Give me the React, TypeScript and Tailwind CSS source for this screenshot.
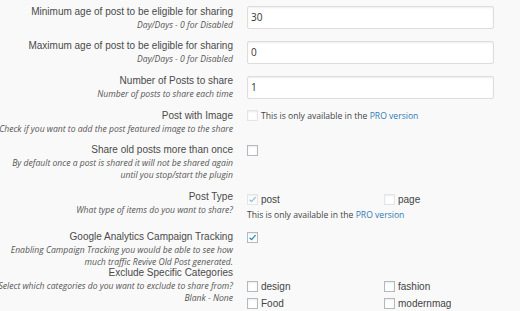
import React from "react";

const Check = ({ checked = false, disabled = false }: { checked?: boolean; disabled?: boolean }) => (
  <div
    className={
      "w-[11px] h-[11px] bg-white border flex items-center justify-center shrink-0 shadow-[inset_0_1px_2px_rgba(0,0,0,0.08)] " +
      (disabled ? "border-[#e5e5e5]" : "border-[#b4b9be]")
    }
  >
    {checked && (
      <svg width="9" height="9" viewBox="0 0 10 10">
        <path d="M1.8 5.2 L4 7.4 L8.4 2.4" fill="none" stroke={disabled ? "#8cbfe0" : "#1e8cbe"} strokeWidth="1.4" />
      </svg>
    )}
  </div>
);

const Label = ({ title, subs, mt }: { title: string; subs: string[]; mt: string }) => (
  <div className={"w-[233px] shrink-0 flex flex-col items-end " + mt}>
    <div className="whitespace-nowrap text-[10px] leading-[14px] text-[#4a4a4a]" style={{ fontFamily: '"Liberation Sans", Arial, sans-serif' }}>
      {title}
    </div>
    {subs.map((s) => (
      <div
        key={s}
        className="whitespace-nowrap italic text-[8.6px] leading-[12px] text-[#555]"
        style={{ fontFamily: '"Open Sans", sans-serif' }}
      >
        {s}
      </div>
    ))}
  </div>
);

const Input = ({ value }: { value: string }) => (
  <div
    className="mt-[6px] w-[247px] h-[23px] bg-white border border-[#dddddd] rounded-[2px] shadow-[inset_0_1px_2px_rgba(0,0,0,0.07)] flex items-center pl-[3px] text-[10px] text-[#333]"
    style={{ fontFamily: '"Open Sans", sans-serif' }}
  >
    {value}
  </div>
);

const open = { fontFamily: '"Open Sans", sans-serif' };
const arial = { fontFamily: '"Liberation Sans", Arial, sans-serif' };

const Pro = ({ cls }: { cls: string }) => (
  <div className={"text-[8.6px] leading-[12px] text-[#444] whitespace-nowrap " + cls} style={open}>
    This is only available in the <span className="text-[#2e7ab5]">PRO version</span>
  </div>
);

export default function App() {
  return (
    <div className="w-[520px] h-[311px] bg-[#f9f9f9] overflow-hidden relative">
      <div className="flex h-[35px]">
        <Label title="Minimum age of post to be eligible for sharing" subs={["Day/Days - 0 for Disabled"]} mt="mt-[5px]" />
        <div className="ml-[14px]">
          <Input value="30" />
        </div>
      </div>
      <div className="flex h-[35px]">
        <Label title="Maximum age of post to be eligible for sharing" subs={["Day/Days - 0 for Disabled"]} mt="mt-[4px]" />
        <div className="ml-[14px]">
          <Input value="0" />
        </div>
      </div>
      <div className="flex h-[35px]">
        <Label title="Number of Posts to share" subs={["Number of posts to share each time"]} mt="mt-[4px]" />
        <div className="ml-[14px]">
          <Input value="1" />
        </div>
      </div>
      <div className="flex h-[34px]">
        <Label title="Post with Image" subs={["Check if you want to add the post featured image to the share"]} mt="mt-[4px]" />
        <div className="ml-[14px] mt-[5px] flex items-center gap-[3px] h-[11px]">
          <Check disabled />
          <Pro cls="mt-[1px]" />
        </div>
      </div>
      <div className="flex h-[46px]">
        <Label
          title="Share old posts more than once"
          subs={["By default once a post is shared it will not be shared again", "until you stop/start the plugin"]}
          mt="mt-[4px]"
        />
        <div className="ml-[14px] mt-[6px]">
          <Check />
        </div>
      </div>
      <div className="flex h-[41px]">
        <Label title="Post Type" subs={["What type of items do you want to share?"]} mt="mt-[5px]" />
        <div className="ml-[14px] mt-[9px] flex flex-col">
          <div className="flex h-[11px]">
            <div className="w-[137px] flex items-center gap-[3px]">
              <Check checked disabled />
              <span className="text-[10px] text-[#444]" style={arial}>post</span>
            </div>
            <div className="flex items-center gap-[3px]">
              <Check disabled />
              <span className="text-[10px] text-[#444]" style={arial}>page</span>
            </div>
          </div>
          <Pro cls="mt-[4px]" />
        </div>
      </div>
      <div className="flex h-[36px]">
        <Label
          title="Google Analytics Campaign Tracking"
          subs={["Enabling Campaign Tracking you would be able to see how", "much traffic Revive Old Post generated."]}
          mt="mt-[4px]"
        />
        <div className="ml-[14px] mt-[6px]">
          <Check checked />
        </div>
      </div>
      <div className="flex">
        <Label
          title="Exclude Specific Categories"
          subs={["Select which categories do you want to exclude to share from?", "Blank - None"]}
          mt="mt-[4px]"
        />
        <div className="ml-[14px] mt-[19px] grid grid-cols-[137px_137px] gap-y-[6px]">
          {["design", "fashion", "Food", "modernmag"].map((c) => (
            <div key={c} className="flex items-center gap-[3px]">
              <Check />
              <span className="text-[10px] leading-[11px] text-[#444]" style={arial}>{c}</span>
            </div>
          ))}
        </div>
      </div>
    </div>
  );
}
